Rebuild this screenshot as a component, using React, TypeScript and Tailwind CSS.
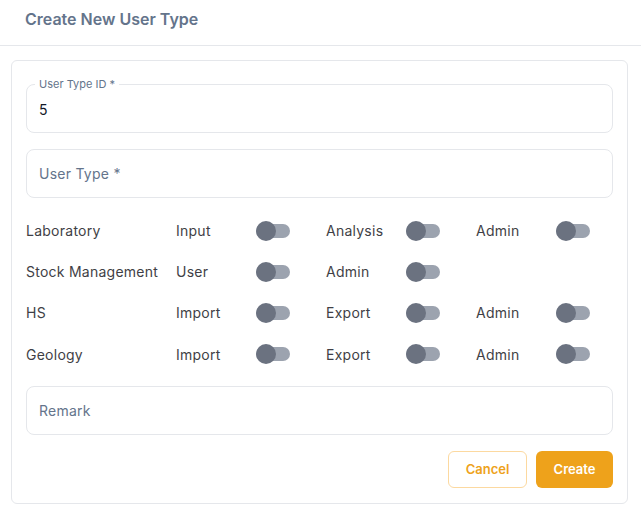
import React from "react";

type Perm = { label: string };
type Row = { name: string; perms: Perm[] };

const rows: Row[] = [
  { name: "Laboratory", perms: [{ label: "Input" }, { label: "Analysis" }, { label: "Admin" }] },
  { name: "Stock Management", perms: [{ label: "User" }, { label: "Admin" }] },
  { name: "HS", perms: [{ label: "Import" }, { label: "Export" }, { label: "Admin" }] },
  { name: "Geology", perms: [{ label: "Import" }, { label: "Export" }, { label: "Admin" }] },
];

function Toggle() {
  return (
    <div className="relative flex h-5 w-[34px] items-center">
      <div className="h-[14px] w-full rounded-full bg-[#9ca3af]" />
      <div className="absolute left-0 top-0 h-5 w-5 rounded-full bg-[#6b7280]" />
    </div>
  );
}

export default function App() {
  return (
    <div className="min-h-screen bg-white font-['Inter',sans-serif] text-[14px] tracking-[0.25px] text-[#3f3f46]">
      <div className="flex h-[46px] items-center border-b border-[#e5e7eb] px-[25px] pb-[7px]">
        <h2 className="text-[16px] font-semibold tracking-normal text-[#64748b]">Create New User Type</h2>
      </div>

      <div className="ml-[11px] mr-[13px] mt-[14px] rounded-md border border-[#e5e7eb] px-[14px] pb-[15px] pt-[23px]">
        <div className="relative h-[49px] rounded-lg border border-[#e5e7eb] px-3">
          <span className="absolute -top-[8px] left-[8px] bg-white px-[4px] text-[11px] leading-[14px] tracking-normal text-[#64748b]">
            User Type ID *
          </span>
          <div className="flex h-full items-center pt-[2px] text-[14px] text-[#111827]">5</div>
        </div>

        <div className="mt-[16px] flex h-[49px] items-center rounded-lg border border-[#e5e7eb] px-3 text-[14px] text-[#64748b]">
          User Type *
        </div>

        <div className="mt-[12px]">
          {rows.map((row, idx) => (
            <div key={row.name} className={`flex items-center ${idx === 3 ? "h-[42px]" : "h-[41px]"}`}>
              <div className="w-[150px] shrink-0">{row.name}</div>
              {row.perms.map((p, i) => (
                <div key={i} className="flex w-[150px] shrink-0 items-center">
                  <div className="w-[80px] shrink-0">{p.label}</div>
                  <Toggle />
                </div>
              ))}
            </div>
          ))}
        </div>

        <div className="mt-[11px] flex h-[49px] items-center rounded-lg border border-[#e5e7eb] px-3 text-[14px] text-[#64748b]">
          Remark
        </div>

        <div className="mt-[16px] flex justify-end gap-[9px]">
          <button
            type="button"
            className="h-[37px] w-[79px] rounded-md border border-[#fcd9a0] bg-white text-[13px] font-semibold tracking-normal text-[#eea21b]"
          >
            Cancel
          </button>
          <button
            type="button"
            className="h-[37px] w-[77px] rounded-md bg-[#eea21b] text-[13px] font-semibold tracking-normal text-white"
          >
            Create
          </button>
        </div>
      </div>
    </div>
  );
}
